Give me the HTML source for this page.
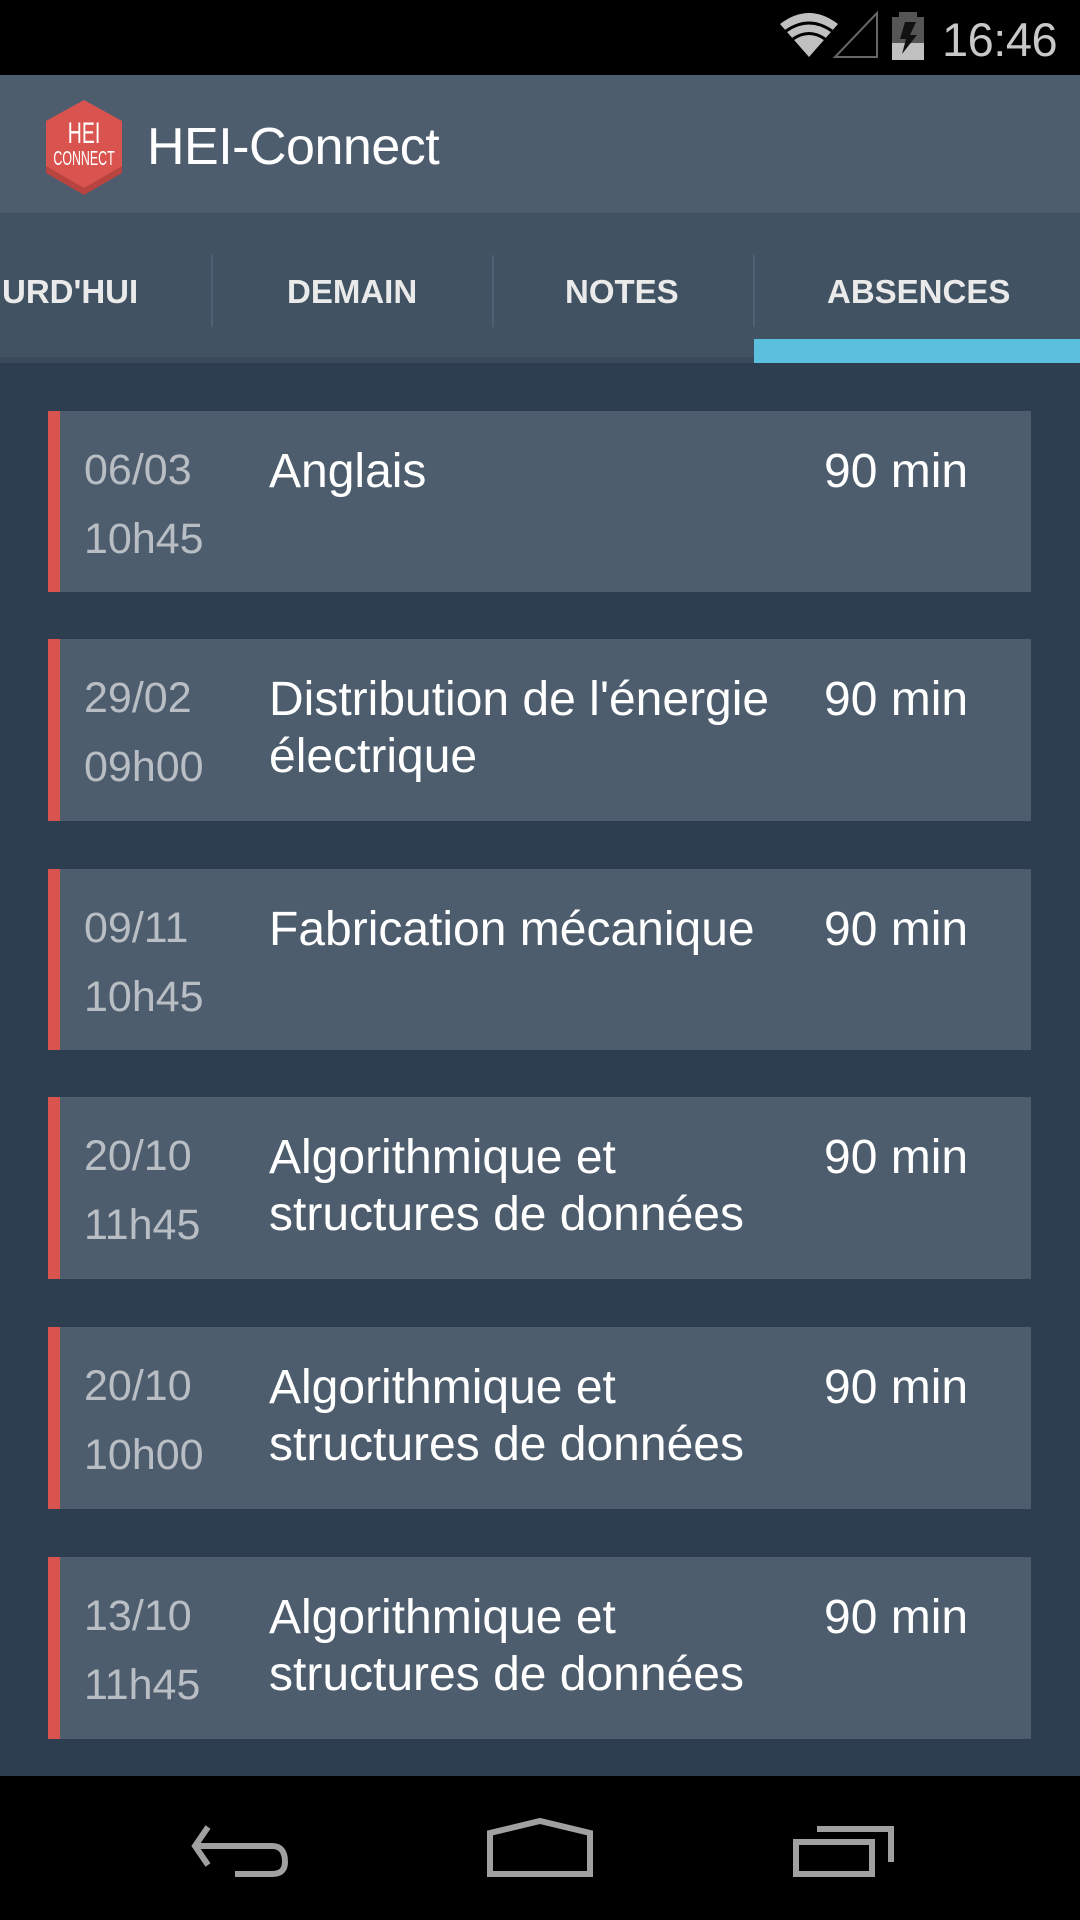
<!DOCTYPE html>
<html><head><meta charset="utf-8"><style>
*{margin:0;padding:0;box-sizing:border-box}
body{width:1080px;height:1920px;overflow:hidden;background:#2c3e50;font-family:"Liberation Sans",sans-serif;position:relative}
.abs{position:absolute}
.status{left:0;top:0;width:1080px;height:75px;background:#000}
.time{left:942px;top:12px;font-size:47px;color:#c8c8c8;letter-spacing:-0.5px}
.action{left:0;top:75px;width:1080px;height:138px;background:#4d5d6e}
.title{left:147px;top:117px;font-size:52px;color:#fff;letter-spacing:-0.5px}
.tabs{left:0;top:213px;width:1080px;height:150px;background:#415263}
.tabstrip{left:0;top:357px;width:1080px;height:6px;background:#3a4a5b}
.tab{top:273px;font-size:33px;font-weight:bold;color:#eaeaea;white-space:nowrap}
.div{top:255px;width:2px;height:72px;background:#4f6072}
.ind{left:754px;top:339px;width:326px;height:24px;background:#5bc0de}
.card{left:48px;width:983px;height:181px;background:#4d5d6e;border-left:12px solid #d9534f}
.d{position:absolute;left:24px;font-size:43px;color:#b9bec4;white-space:nowrap}
.t{position:absolute;left:209px;top:32px;font-size:48px;line-height:57px;color:#fff;white-space:nowrap}
.m{position:absolute;left:764px;top:32px;font-size:48px;line-height:57px;color:#fff;white-space:nowrap}
.nav{left:0;top:1776px;width:1080px;height:144px;background:#000}
</style></head><body>
<div class="abs status"></div>
<svg class="abs" style="left:0;top:0" width="940" height="75">
<path d="M809,57 L780,24 Q809,2 838,24 Z" fill="#c0c0c0"/>
<path d="M786,31 Q809,15 832,31" stroke="#000" stroke-width="3" fill="none"/>
<path d="M793,39 Q809,28 825,39" stroke="#000" stroke-width="3" fill="none"/>
<path d="M835,57 L877,57 L877,13 Z" fill="none" stroke="#666" stroke-width="2"/>
<rect x="899" y="12" width="18" height="5" fill="#555"/>
<rect x="892" y="17" width="32" height="26" fill="#555"/>
<rect x="892" y="43" width="32" height="17" fill="#c0c0c0"/>
<path d="M905,22 L916,22 L910,35 L917,35 L902,54 L906,39 L900,39 Z" fill="#111"/>
</svg>
<div class="abs time">16:46</div>
<div class="abs action"></div>
<svg class="abs" style="left:40px;top:95px" width="90" height="105">
<path d="M44,9 L82,30 L82,78 L44,100 L6,78 L6,30 Z" fill="#b84440"/>
<path d="M44,5 L82,26 L82,71 L44,93 L6,71 L6,26 Z" fill="#d9534f"/>
<text x="44" y="48" text-anchor="middle" font-family="Liberation Sans, sans-serif" font-size="30" fill="#fff" transform="translate(44,0) scale(0.65,1) translate(-44,0)">HEI</text>
<text x="44" y="70" text-anchor="middle" font-family="Liberation Sans, sans-serif" font-size="20" fill="#fff" transform="translate(44,0) scale(0.62,1) translate(-44,0)">CONNECT</text>
</svg>
<div class="abs title">HEI-Connect</div>
<div class="abs tabs"></div>
<div class="abs tabstrip"></div>
<div class="abs tab" style="left:2px">URD'HUI</div>
<div class="abs div" style="left:211px"></div>
<div class="abs tab" style="left:287px">DEMAIN</div>
<div class="abs div" style="left:492px"></div>
<div class="abs tab" style="left:565px">NOTES</div>
<div class="abs div" style="left:753px"></div>
<div class="abs tab" style="left:827px">ABSENCES</div>
<div class="abs ind"></div>

<div class="abs card" style="top:411px"><div class="d" style="top:35px">06/03</div><div class="d" style="top:104px">10h45</div><div class="t">Anglais</div><div class="m">90 min</div></div>
<div class="abs card" style="top:639px;height:182px"><div class="d" style="top:35px">29/02</div><div class="d" style="top:104px">09h00</div><div class="t">Distribution de l'énergie<br>électrique</div><div class="m">90 min</div></div>
<div class="abs card" style="top:869px"><div class="d" style="top:35px">09/11</div><div class="d" style="top:104px">10h45</div><div class="t">Fabrication mécanique</div><div class="m">90 min</div></div>
<div class="abs card" style="top:1097px;height:182px"><div class="d" style="top:35px">20/10</div><div class="d" style="top:104px">11h45</div><div class="t">Algorithmique et<br>structures de données</div><div class="m">90 min</div></div>
<div class="abs card" style="top:1327px;height:182px"><div class="d" style="top:35px">20/10</div><div class="d" style="top:104px">10h00</div><div class="t">Algorithmique et<br>structures de données</div><div class="m">90 min</div></div>
<div class="abs card" style="top:1557px;height:182px"><div class="d" style="top:35px">13/10</div><div class="d" style="top:104px">11h45</div><div class="t">Algorithmique et<br>structures de données</div><div class="m">90 min</div></div>

<div class="abs nav"></div>
<svg class="abs" style="left:0;top:1776px" width="1080" height="144">
<g fill="none" stroke="#a0a0a0" stroke-width="6">
<path d="M208,51 L195,70 L208,89"/>
<path d="M195,70 L272,70 Q285,70 285,86 Q285,98 272,98 L235,98"/>
<path d="M490,57 L490,98 L590,98 L590,57 L540,45 Z"/>
<path d="M796,66 L872,66 L872,98 L796,98 Z"/>
<path d="M817,53 L891,53 L891,86"/>
</g>
</svg>
</body></html>
